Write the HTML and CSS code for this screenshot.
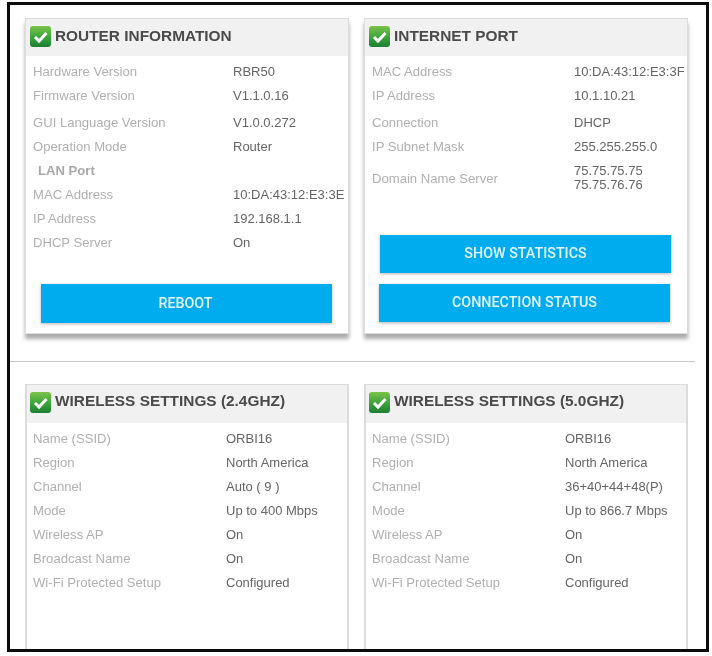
FILE: index.html
```html
<!DOCTYPE html>
<html lang="en">
<head>
<meta charset="utf-8">
<title>Router status</title>
<link rel="stylesheet" href="styles.css">
</head>
<body>
<svg class="defs" width="0" height="0" aria-hidden="true">
  <defs>
    <linearGradient id="tick-bg" x1="0" y1="0" x2="0" y2="1">
      <stop offset="0" stop-color="#7cc24a"/>
      <stop offset="0.5" stop-color="#3fa63c"/>
      <stop offset="1" stop-color="#1c7f34"/>
    </linearGradient>
    <symbol id="tick" viewBox="0 0 21 21">
      <rect width="21" height="21" rx="3" fill="url(#tick-bg)"/>
      <path d="M5 11l4 4 7.5-8" fill="none" stroke="#fff" stroke-width="3"/>
    </symbol>
  </defs>
</svg>
<main class="frame">
  <section class="cards cards-top">
    <article class="card">
      <h2 class="card-head"><svg class="tick"><use href="#tick"/></svg><span>ROUTER INFORMATION</span></h2>
      <div class="rows">
        <div class="row"><span class="label">Hardware Version</span><span class="value">RBR50</span></div>
        <div class="row row-gap"><span class="label">Firmware Version</span><span class="value">V1.1.0.16</span></div>
        <div class="row"><span class="label">GUI Language Version</span><span class="value">V1.0.0.272</span></div>
        <div class="row"><span class="label">Operation Mode</span><span class="value">Router</span></div>
        <div class="row"><span class="label sub">LAN Port</span></div>
        <div class="row"><span class="label">MAC Address</span><span class="value">10:DA:43:12:E3:3E</span></div>
        <div class="row"><span class="label">IP Address</span><span class="value">192.168.1.1</span></div>
        <div class="row"><span class="label">DHCP Server</span><span class="value">On</span></div>
      </div>
      <div class="actions">
        <button class="btn" type="button">REBOOT</button>
      </div>
    </article>
    <article class="card">
      <h2 class="card-head"><svg class="tick"><use href="#tick"/></svg><span>INTERNET PORT</span></h2>
      <div class="rows rows-net">
        <div class="row"><span class="label">MAC Address</span><span class="value">10:DA:43:12:E3:3F</span></div>
        <div class="row row-gap"><span class="label">IP Address</span><span class="value">10.1.10.21</span></div>
        <div class="row"><span class="label">Connection</span><span class="value">DHCP</span></div>
        <div class="row"><span class="label">IP Subnet Mask</span><span class="value">255.255.255.0</span></div>
        <div class="row row-dns"><span class="label">Domain Name Server</span><span class="value dns">75.75.75.75<br>75.75.76.76</span></div>
      </div>
      <div class="actions actions-net">
        <button class="btn btn-shift" type="button">SHOW STATISTICS</button>
        <button class="btn" type="button">CONNECTION STATUS</button>
      </div>
    </article>
  </section>
  <hr class="divider">
  <section class="cards">
    <article class="card card-low">
      <h2 class="card-head"><svg class="tick"><use href="#tick"/></svg><span>WIRELESS SETTINGS (2.4GHZ)</span></h2>
      <div class="rows rows-wifi">
        <div class="row"><span class="label">Name (SSID)</span><span class="value">ORBI16</span></div>
        <div class="row"><span class="label">Region</span><span class="value">North America</span></div>
        <div class="row"><span class="label">Channel</span><span class="value">Auto ( 9 )</span></div>
        <div class="row"><span class="label">Mode</span><span class="value">Up to 400 Mbps</span></div>
        <div class="row"><span class="label">Wireless AP</span><span class="value">On</span></div>
        <div class="row"><span class="label">Broadcast Name</span><span class="value">On</span></div>
        <div class="row"><span class="label">Wi-Fi Protected Setup</span><span class="value">Configured</span></div>
      </div>
    </article>
    <article class="card card-low">
      <h2 class="card-head"><svg class="tick"><use href="#tick"/></svg><span>WIRELESS SETTINGS (5.0GHZ)</span></h2>
      <div class="rows rows-wifi">
        <div class="row"><span class="label">Name (SSID)</span><span class="value">ORBI16</span></div>
        <div class="row"><span class="label">Region</span><span class="value">North America</span></div>
        <div class="row"><span class="label">Channel</span><span class="value">36+40+44+48(P)</span></div>
        <div class="row"><span class="label">Mode</span><span class="value">Up to 866.7 Mbps</span></div>
        <div class="row"><span class="label">Wireless AP</span><span class="value">On</span></div>
        <div class="row"><span class="label">Broadcast Name</span><span class="value">On</span></div>
        <div class="row"><span class="label">Wi-Fi Protected Setup</span><span class="value">Configured</span></div>
      </div>
    </article>
  </section>
</main>
</body>
</html>
```
FILE: styles.css
```css
* { box-sizing: border-box; }
html, body { margin: 0; padding: 0; background: #fff; }
body { font-family: "Liberation Sans", Arial, sans-serif; }
.defs { display: block; height: 0; }
.frame {
  width: 702px;
  height: 650px;
  margin: 2px 0 0 7px;
  border: 3px solid #0b0b0b;
  overflow: hidden;
  background: #fff;
  filter: blur(0.3px);
}
.cards {
  display: grid;
  grid-template-columns: 324px 324px;
  column-gap: 15px;
  padding-left: 15px;
}
.cards-top { padding-top: 13px; }
.card {
  display: flex;
  flex-direction: column;
  height: 316px;
  background: #fff;
  border: 1px solid #dcdcdc;
  box-shadow: 0 5px 4px #ababab;
}
.card-low { height: 300px; box-shadow: none; border-width: 1px 2px; }
.card-head {
  display: flex;
  align-items: center;
  gap: 4px;
  height: 37px;
  margin: 0;
  padding: 0 0 2px 4px;
  background: #f1f1f1;
  color: #4a4a4a;
  font-size: 15.4px;
  font-weight: 700;
  white-space: nowrap;
}
.card-head span { margin-bottom: 2px; }
.card-low .card-head { height: 38px; padding: 0 0 3px 3px; }
.card-low .card-head span { margin-bottom: 3px; }
.tick { width: 21px; height: 21px; flex: none; }
.rows { padding: 3px 0 0 7px; }
.rows-wifi { padding-left: 6px; }
.row {
  display: grid;
  grid-template-columns: 200px 1fr;
  align-items: center;
  height: 24px;
  font-size: 13.1px;
  white-space: nowrap;
}
.row-gap { margin-bottom: 3px; }
.label { color: #b0b0b0; }
.sub { padding-left: 5px; font-weight: 700; color: #a8a8a8; }
.value { color: #666; font-size: 13px; }
.rows-net .row { grid-template-columns: 202px 1fr; }
.row-dns { height: 40px; }
.dns { line-height: 14px; }
.rows-wifi .row { grid-template-columns: 193px 1fr; }
.actions {
  display: flex;
  flex-direction: column;
  gap: 11px;
  margin-top: auto;
  padding: 0 16px 10px 15px;
}
.actions-net { padding: 0 16px 11px 14px; }
.btn {
  display: block;
  width: 291px;
  height: 39px;
  border: 0;
  border-radius: 0;
  padding: 0 2px 2px 0;
  background: #00aced;
  color: #e4f5fc;
  font-family: "Roboto", "Liberation Sans", sans-serif;
  font-size: 14.3px;
  font-weight: 500;
  box-shadow: 0 1px 3px rgba(0, 0, 0, 0.3);
}
.actions-net .btn { height: 38px; padding-right: 0; }
.btn-shift { margin-left: 1px; }
.divider {
  height: 0;
  margin: 27px 11px 22px 0;
  border: 0;
  border-top: 1px solid #c9c9c9;
}
```
